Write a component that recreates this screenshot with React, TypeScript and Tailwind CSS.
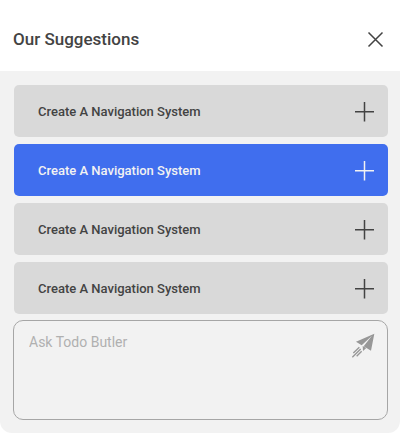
import { useState } from "react";

const suggestions = [
  "Create A Navigation System",
  "Create A Navigation System",
  "Create A Navigation System",
  "Create A Navigation System",
];

function CloseIcon() {
  return (
    <svg width="17" height="17" viewBox="0 0 17 17" fill="none" stroke="currentColor" strokeWidth="1.5" aria-hidden="true">
      <path d="M1.5 1.5L15.5 15.5M15.5 1.5L1.5 15.5" />
    </svg>
  );
}

function PlusIcon() {
  return (
    <svg width="21" height="21" viewBox="0 0 21 21" fill="none" stroke="currentColor" strokeWidth="1.5" aria-hidden="true">
      <path d="M11.5 1V20.5M2 10.7H21" />
    </svg>
  );
}

function SendIcon() {
  return (
    <svg width="24" height="26" viewBox="0 0 72 78" aria-hidden="true">
      <g fill="#979797">
        <path d="M70 2L15 26L32 37L63 8L38 40L60 53Z" />
        <path d="M35 39L36 54L46 45Z" />
      </g>
      <g stroke="#979797" strokeWidth="4" fill="none">
        <path d="M25 43L7 60M29 48L4 73M32 55L17 70" />
      </g>
    </svg>
  );
}

export default function App() {
  const [selected, setSelected] = useState(1);
  return (
    <main className="w-full overflow-hidden rounded-b-xl bg-[#f2f2f2] font-[Roboto,sans-serif] text-[#434343]">
      <header className="flex items-center justify-between bg-white pt-7 pr-4 pb-5 pl-3.25">
        <h1 className="text-[17px] leading-[23px] font-medium">Our Suggestions</h1>
        <button type="button" aria-label="Close">
          <CloseIcon />
        </button>
      </header>
      <section className="px-3 pt-3.5 pb-3.25">
        <ul className="flex flex-col gap-[7px] pl-0.5">
          {suggestions.map((label, i) => (
            <li key={i}>
              <button
                type="button"
                onClick={() => setSelected(i)}
                className={
                  "flex h-13 w-full items-center justify-between rounded-[5px] pt-px pr-3.5 pl-6 text-left text-[13px] leading-5 font-medium " +
                  (i === selected ? "bg-[#406eee] text-[#f2f2f2]" : "bg-[#d9d9d9]")
                }
              >
                {label}
                <PlusIcon />
              </button>
            </li>
          ))}
        </ul>
        <form className="mt-1.5 ml-px flex h-25 items-start rounded-[10px] border border-[#a6a6a6] pt-[11px] pr-3 pl-[15px]">
          <textarea
            aria-label="Ask Todo Butler"
            placeholder="Ask Todo Butler"
            className="h-20 min-w-0 flex-1 resize-none bg-transparent text-sm leading-5 outline-none placeholder:text-[#b0b0b0]"
          />
          <button type="submit" aria-label="Send" className="pt-px">
            <SendIcon />
          </button>
        </form>
      </section>
    </main>
  );
}
